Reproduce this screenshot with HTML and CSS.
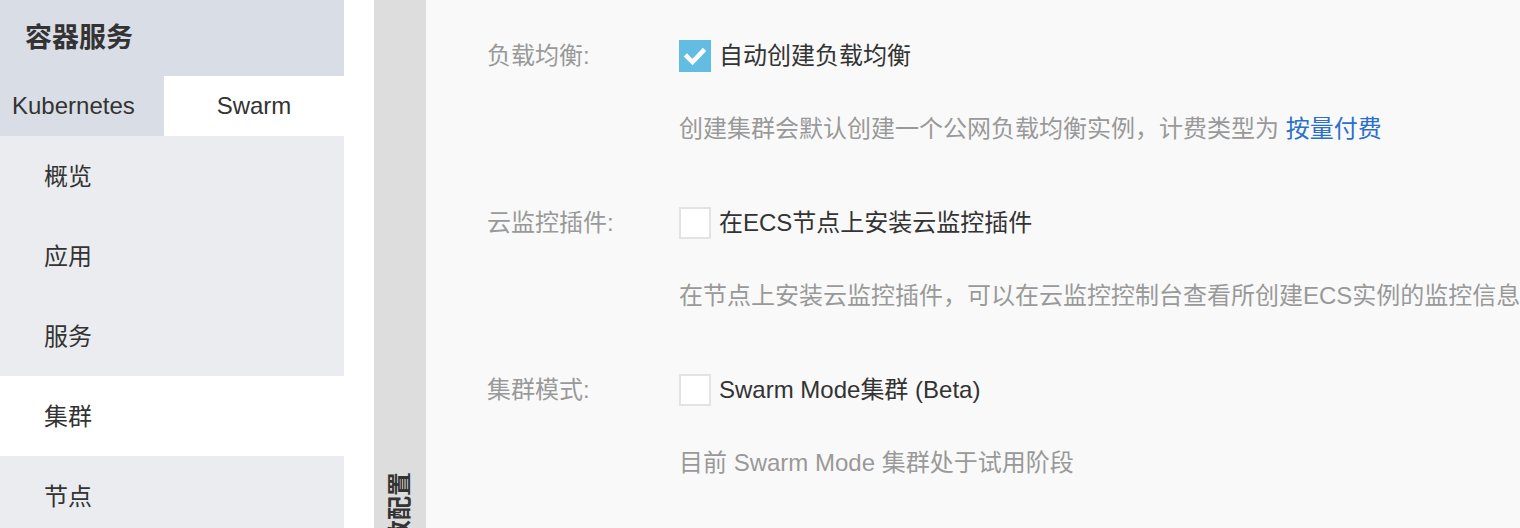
FILE: index.html
```html
<!DOCTYPE html>
<html lang="zh-CN">
<head>
<meta charset="utf-8">
<title>容器服务</title>
<link rel="stylesheet" href="styles.css">
</head>
<body>
<div class="page">
  <aside class="sidebar">
    <div class="brand">容器服务</div>
    <div class="tabs">
      <div class="tab tab-k">Kubernetes</div>
      <div class="tab tab-active">Swarm</div>
    </div>
    <nav class="menu">
      <div class="menu-item">概览</div>
      <div class="menu-item">应用</div>
      <div class="menu-item">服务</div>
      <div class="menu-item active">集群</div>
      <div class="menu-item">节点</div>
    </nav>
  </aside>
  <div class="gutter"></div>
  <div class="section-strip">
    <div class="section-title">参数配置</div>
  </div>
  <main class="content">
    <div class="form-row">
      <div class="form-line">
        <div class="form-label">负载均衡:</div>
        <label class="check">
          <span class="box checked">
            <svg viewBox="0 0 32 32" width="32" height="32"><path d="M8 16.5 L13.5 22 L24 11" fill="none" stroke="#fff" stroke-width="4.5" stroke-linecap="square"/></svg>
          </span>
          <span class="check-text">自动创建负载均衡</span>
        </label>
      </div>
      <div class="help">创建集群会默认创建一个公网负载均衡实例，计费类型为 <a class="link">按量付费</a></div>
    </div>
    <div class="form-row">
      <div class="form-line">
        <div class="form-label">云监控插件:</div>
        <label class="check">
          <span class="box"></span>
          <span class="check-text">在ECS节点上安装云监控插件</span>
        </label>
      </div>
      <div class="help">在节点上安装云监控插件，可以在云监控控制台查看所创建ECS实例的监控信息</div>
    </div>
    <div class="form-row">
      <div class="form-line">
        <div class="form-label">集群模式:</div>
        <label class="check">
          <span class="box"></span>
          <span class="check-text">Swarm Mode集群 (Beta)</span>
        </label>
      </div>
      <div class="help">目前 Swarm Mode 集群处于试用阶段</div>
    </div>
  </main>
</div>
</body>
</html>
```

FILE: styles.css
```css
html, body {
  margin: 0;
  padding: 0;
  background: #ffffff;
}
body {
  font-family: "Liberation Sans", "Noto Sans CJK SC", sans-serif;
  font-size: 24px;
  color: #333333;
  overflow: hidden;
}
.page {
  display: flex;
  height: 528px;
  overflow: hidden;
}
.sidebar {
  width: 344px;
  flex: 0 0 344px;
  background: #eaecf0;
  display: flex;
  flex-direction: column;
  overflow: hidden;
}
.brand {
  height: 76px;
  flex-shrink: 0;
  box-sizing: border-box;
  padding-bottom: 5px;
  background: #d9dde5;
  display: flex;
  align-items: center;
  padding-left: 25px;
  font-size: 27px;
  font-weight: bold;
  color: #333333;
}
.tabs {
  display: flex;
  height: 60px;
  flex-shrink: 0;
}
.tab {
  display: flex;
  align-items: center;
  justify-content: center;
  color: #333333;
}
.tab-k {
  width: 164px;
  background: #d9dde5;
  justify-content: flex-start;
  padding-left: 12px;
  box-sizing: border-box;
}
.tab-active {
  flex: 1;
  background: #ffffff;
}
.menu {
  display: flex;
  flex-direction: column;
  flex-shrink: 0;
}
.menu-item {
  height: 80px;
  flex-shrink: 0;
  box-sizing: border-box;
  padding-bottom: 4px;
  display: flex;
  align-items: center;
  padding-left: 44px;
  color: #333333;
}
.menu-item.active {
  background: #ffffff;
}
.gutter {
  width: 30px;
  flex: 0 0 30px;
}
.section-strip {
  width: 52px;
  flex: 0 0 52px;
  background: #dddddd;
  display: flex;
  flex-direction: column;
  align-items: center;
}
.section-title {
  margin-top: 472px;
  flex-shrink: 0;
  writing-mode: vertical-rl;
  text-orientation: sideways;
  transform: rotate(180deg);
  font-weight: bold;
  font-size: 24px;
  line-height: 24px;
  color: #333333;
  white-space: nowrap;
}
.content {
  flex: 1;
  background: #f9f9f9;
  padding: 40px 0 0 61px;
}
.form-row {
  margin-bottom: 62px;
}
.form-line {
  display: flex;
  align-items: center;
  height: 32px;
}
.form-label {
  width: 192px;
  flex: 0 0 192px;
  color: #999999;
  line-height: 32px;
}
.check {
  display: flex;
  align-items: center;
}
.box {
  width: 32px;
  height: 32px;
  box-sizing: border-box;
  border: 2px solid #e3e3e3;
  background: #ffffff;
  display: block;
}
.box.checked {
  border: none;
  background: #63bde2;
}
.box svg {
  display: block;
}
.check-text {
  margin-left: 8px;
  line-height: 32px;
  color: #333333;
}
.help {
  margin-top: 41px;
  margin-left: 192px;
  line-height: 32px;
  color: #999999;
  white-space: nowrap;
}
.link {
  color: #2a6fcc;
  text-decoration: none;
}
```
